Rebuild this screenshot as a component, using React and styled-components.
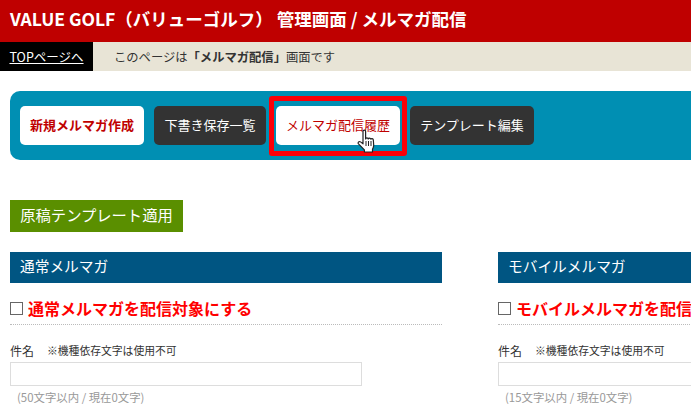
import React from 'react';
import styled, { createGlobalStyle } from 'styled-components';

const GlobalStyle = createGlobalStyle`
  html, body {
    margin: 0;
    height: 100%;
    overflow: hidden;
    background: #fff;
  }
  body {
    font-family: "Noto Sans CJK JP", "Noto Sans", sans-serif;
    color: #333;
  }
`;

const Header = styled.header`
  height: 42px;
  width: 691px;
  background: #bf0000;
  color: #fff;
  display: flex;
  align-items: center;
  padding: 0 10px 6px;
  box-sizing: border-box;
  font-size: 17.5px;
  font-weight: 700;
  white-space: nowrap;
`;

const InfoBar = styled.div`
  height: 29px;
  background: #e8e4d6;
  display: flex;
  align-items: center;
  font-size: 12.3px;
  white-space: nowrap;
`;

const TopLink = styled.a`
  width: 93px;
  height: 100%;
  background: #000;
  color: #fff;
  display: flex;
  align-items: center;
  justify-content: center;
  font-size: 12.5px;
  text-decoration: underline;
`;

const InfoText = styled.p`
  margin: 0 0 0 21px;
  strong { font-weight: 700; }
`;

const Main = styled.main`
  width: 1000px;
  padding: 20px 0 0 10px;
  box-sizing: border-box;
`;

const NavPanel = styled.nav`
  height: 69px;
  background: #008fb3;
  border-radius: 10px;
  display: flex;
  align-items: center;
  gap: 10px;
  padding-left: 10px;
`;

const NavButton = styled.a`
  position: relative;
  width: ${p => p.$width}px;
  height: 39px;
  padding-bottom: 2px;
  box-sizing: border-box;
  border-radius: 5px;
  display: flex;
  align-items: center;
  justify-content: center;
  font-size: 13px;
  white-space: nowrap;
  background: ${p => (p.$light ? '#fff' : '#333')};
  color: ${p => (p.$light ? '#bf0000' : '#fff')};
  font-weight: ${p => (p.$bold ? 700 : 400)};
`;

const Highlight = styled.span`
  position: absolute;
  inset: -10px -7px -11px -7px;
  border: 5px solid #fb0007;
  border-radius: 3px;
`;

const Pointer = styled.svg`
  position: absolute;
  left: 81px;
  top: 23px;
  width: 20px;
  height: 24px;
`;

const TemplateButton = styled.button`
  display: block;
  margin: 40px 0 20px;
  width: 173px;
  height: 32px;
  border: 0;
  padding: 0 0 4px;
  background: #5a8f00;
  color: #fff;
  font: inherit;
  font-size: 15.3px;
`;

const Columns = styled.div`
  display: grid;
  grid-template-columns: 432px 432px;
  gap: 56px;
`;

const Heading = styled.h2`
  margin: 0;
  height: 31px;
  background: #005582;
  color: #fff;
  font-size: 14.7px;
  font-weight: 400;
  line-height: 27px;
  padding-left: 10px;
`;

const TargetRow = styled.label`
  display: flex;
  align-items: center;
  gap: 5px;
  height: 42px;
  padding-top: 9px;
  box-sizing: border-box;
  border-bottom: 1px dotted #bbb;
  color: #f00;
  font-size: 16px;
  font-weight: 700;
  white-space: nowrap;
`;

const CheckBox = styled.span`
  width: 11px;
  height: 11px;
  border: 1px solid #666;
  flex: none;
`;

const FieldLabel = styled.div`
  margin-top: 14px;
  height: 22px;
  display: flex;
  align-items: center;
  gap: 13px;
  font-size: 12px;
`;

const Note = styled.span`
  font-size: 10.8px;
`;

const TextInput = styled.input`
  display: block;
  margin-top: 1px;
  width: 352px;
  height: 24px;
  box-sizing: border-box;
  border: 1px solid #ddd;
  outline: 0;
`;

const Hint = styled.div`
  margin-top: 3px;
  padding-left: 7px;
  font-size: 11.4px;
  color: #999;
`;

const columns = [
  { title: '通常メルマガ', target: '通常メルマガを配信対象にする', limit: 50 },
  { title: 'モバイルメルマガ', target: 'モバイルメルマガを配信対象にする', limit: 15 },
];

export default function App() {
  return (
    <>
      <GlobalStyle />
      <Header>VALUE GOLF（バリューゴルフ） 管理画面 / メルマガ配信</Header>
      <InfoBar>
        <TopLink>TOPページへ</TopLink>
        <InfoText>このページは<strong>「メルマガ配信」</strong>画面です</InfoText>
      </InfoBar>
      <Main>
        <NavPanel>
          <NavButton $width={124} $light $bold>新規メルマガ作成</NavButton>
          <NavButton $width={112}>下書き保存一覧</NavButton>
          <NavButton $width={124} $light>
            メルマガ配信履歴
            <Highlight />
            <Pointer viewBox="0 0 20 24">
              <path
                d="M6 2.200c0-1.500 2.600-1.500 2.600 0V10c.3-1.400 2.400-1.400 2.600 0 .3-1.200 2.300-1.200 2.600.2.4-1 2.300-.9 2.500.6l.4 5.200c.1 2-.5 3.200-1.200 4.400V23H7.400v-2.200L1.500 14.800c-1-1.300.6-3 2-1.900l2.500 1.900V2.200z"
                fill="#fff"
                stroke="#222"
                strokeWidth="1.2"
                strokeLinejoin="round"
              />
              <path d="M9 12v5M11.500 12v5M14 12v5" stroke="#222" strokeWidth="1" fill="none" />
            </Pointer>
          </NavButton>
          <NavButton $width={124}>テンプレート編集</NavButton>
        </NavPanel>
        <TemplateButton>原稿テンプレート適用</TemplateButton>
        <Columns>
          {columns.map(col => (
            <section key={col.title}>
              <Heading>{col.title}</Heading>
              <TargetRow>
                <CheckBox />
                {col.target}
              </TargetRow>
              <FieldLabel>
                件名
                <Note>※機種依存文字は使用不可</Note>
              </FieldLabel>
              <TextInput />
              <Hint>({col.limit}文字以内 / 現在0文字)</Hint>
            </section>
          ))}
        </Columns>
      </Main>
    </>
  );
}
